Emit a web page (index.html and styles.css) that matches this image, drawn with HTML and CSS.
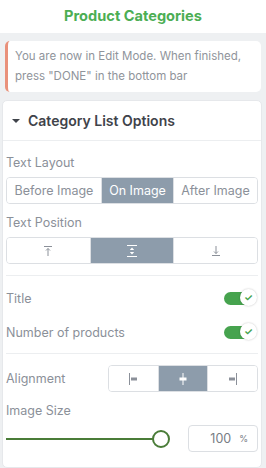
FILE: index.html
```
<!DOCTYPE html>
<html lang="en">
<head>
    <meta charset="UTF-8">
    <meta name="viewport" content="width=device-width, initial-scale=1.0">
    <title>Product Categories</title>
    <link rel="stylesheet" href="styles.css">
</head>
<body>
    <div class="topbar">Product Categories</div>

    <div class="notice">
        You are now in Edit Mode. When finished, press "DONE" in the bottom bar
    </div>

    <div class="panel">
        <div class="panel-head">
            <span class="caret"></span>
            Category List Options
        </div>

        <div class="section section-layout">
            <div class="label">Text Layout</div>
            <div class="seg seg-layout">
                <button>Before Image</button>
                <button class="active">On Image</button>
                <button>After Image</button>
            </div>

            <div class="label">Text Position</div>
            <div class="seg seg-even">
                <button>
                    <svg width="10" height="12" viewBox="0 0 10 12"><path d="M1 1.5h8M5 11V3.5M3 5.5l2-2 2 2" stroke="currentColor" fill="none" stroke-width="1"/></svg>
                </button>
                <button class="active">
                    <svg width="12" height="14" viewBox="0 0 12 14"><path d="M1 1.5h10M1 12.5h10" stroke="currentColor" stroke-width="1"/><path d="M6 3.5l2.2 2.5H3.8zM6 10.5L3.8 8h4.4z" fill="currentColor"/></svg>
                </button>
                <button>
                    <svg width="10" height="12" viewBox="0 0 10 12"><path d="M1 10.5h8M5 1v7.5M3 6.5l2 2 2-2" stroke="currentColor" fill="none" stroke-width="1"/></svg>
                </button>
            </div>
        </div>

        <div class="section section-toggles">
            <div class="row">
                <span class="row-label">Title</span>
                <span class="toggle"><span class="knob">&#10003;</span></span>
            </div>
            <div class="row">
                <span class="row-label">Number of products</span>
                <span class="toggle"><span class="knob">&#10003;</span></span>
            </div>
        </div>

        <div class="section section-image">
            <div class="row row-align">
                <span class="row-label">Alignment</span>
                <div class="seg seg-align">
                    <button>
                        <svg width="12" height="14" viewBox="0 0 12 14"><path d="M2.5 1v12" stroke="currentColor"/><rect x="4" y="5.5" width="6" height="3" fill="currentColor"/></svg>
                    </button>
                    <button class="active">
                        <svg width="12" height="14" viewBox="0 0 12 14"><path d="M6 1v12" stroke="currentColor"/><rect x="2.5" y="5.5" width="7" height="3" fill="currentColor"/></svg>
                    </button>
                    <button>
                        <svg width="12" height="14" viewBox="0 0 12 14"><path d="M9.5 1v12" stroke="currentColor"/><rect x="2" y="5.5" width="6" height="3" fill="currentColor"/></svg>
                    </button>
                </div>
            </div>
            <div class="label">Image Size</div>
            <div class="size-row">
                <div class="slider">
                    <div class="track"></div>
                    <div class="thumb"></div>
                </div>
                <div class="num">
                    <span class="num-val">100</span>
                    <span class="num-unit">%</span>
                </div>
            </div>
        </div>
    </div>
</body>
</html>
```

FILE: styles.css
```
body {
    margin: 0;
    background-color: #eef0f2;
    font-family: Inter, "Noto Sans", sans-serif;
    color: #8b9099;
}
.topbar {
    height: 33px;
    line-height: 32px;
    background-color: #fff;
    text-align: center;
    color: #4cae54;
    font-weight: 700;
    font-size: 14.6px;
}
.notice {
    margin: 8px 5px 0 5px;
    padding: 5px 8px 6px 7px;
    background-color: #fff;
    border-left: 3px solid #e9917b;
    border-radius: 5px;
    font-size: 11.5px;
    line-height: 20px;
    color: #8f949b;
}
.panel {
    margin: 8px 4px 3px 2px;
    background-color: #fff;
    border-radius: 5px;
    border: 1px solid #e6e8eb;
}
.panel-head {
    display: flex;
    align-items: center;
    height: 39px;
    padding-left: 9px;
    font-size: 14px;
    font-weight: 600;
    color: #3f434a;
    border-bottom: 1px solid #eceef0;
}
.caret {
    width: 0;
    height: 0;
    border-left: 4px solid transparent;
    border-right: 4px solid transparent;
    border-top: 4px solid #3f434a;
    margin-right: 8px;
}
.section {
    margin: 0 3px;
    border-bottom: 1px solid #eceef0;
}
.section-layout {
    padding: 14px 0 11px;
}
.section-toggles {
    padding: 5px 0 4px;
}
.section-image {
    padding: 11px 0 15px;
    border-bottom: none;
}
.label {
    font-size: 12.5px;
    line-height: 16px;
    margin-bottom: 6px;
}
.seg {
    display: flex;
    border: 1px solid #dcdfe3;
    border-radius: 4px;
    overflow: hidden;
    margin-bottom: 11px;
}
.seg:last-child {
    margin-bottom: 0;
}
.seg button {
    border: none;
    border-right: 1px solid #dcdfe3;
    background: #fff;
    color: #8b9099;
    font-family: inherit;
    font-size: 12.5px;
    height: 25px;
    padding: 0;
    display: flex;
    align-items: center;
    justify-content: center;
}
.seg button:last-child {
    border-right: none;
}
.seg button.active {
    background-color: #8d9cab;
    color: #fff;
}
.seg-layout button:nth-child(1) { width: 95px; }
.seg-layout button:nth-child(2) { width: 72px; }
.seg-layout button:nth-child(3) { flex: 1; }
.seg-even button {
    flex: 1;
}
.row {
    display: flex;
    align-items: center;
    justify-content: space-between;
    height: 34px;
    font-size: 12.5px;
}
.row-align {
    height: 27px;
    margin-bottom: 11px;
}
.toggle {
    position: relative;
    width: 30px;
    height: 13px;
    background-color: #46a34e;
    border-radius: 7px;
    margin-right: 4px;
}
.knob {
    position: absolute;
    right: -3px;
    top: -3px;
    width: 17px;
    height: 17px;
    border-radius: 50%;
    background: #fff;
    box-shadow: 0 0 2px rgba(0, 0, 0, 0.25);
    color: #46a34e;
    font-size: 10px;
    font-weight: 700;
    line-height: 17px;
    text-align: center;
}
.seg-align {
    width: 148px;
    margin-bottom: 0;
}
.seg-align button {
    flex: 1;
}
.size-row {
    display: flex;
    align-items: center;
    justify-content: space-between;
}
.slider {
    position: relative;
    width: 164px;
    height: 20px;
}
.track {
    position: absolute;
    left: 0;
    right: 8px;
    top: 9px;
    height: 2px;
    background-color: #4a7c38;
}
.thumb {
    position: absolute;
    right: 0;
    top: 1px;
    width: 14px;
    height: 14px;
    border: 2px solid #4a7c38;
    border-radius: 50%;
    background: #fff;
}
.num {
    width: 68px;
    height: 25px;
    border: 1px solid #dcdfe3;
    border-radius: 4px;
    display: flex;
    align-items: center;
    justify-content: flex-end;
    font-size: 12.5px;
    color: #777c84;
}
.num-unit {
    font-size: 9px;
    margin: 0 9px 0 8px;
}
```
